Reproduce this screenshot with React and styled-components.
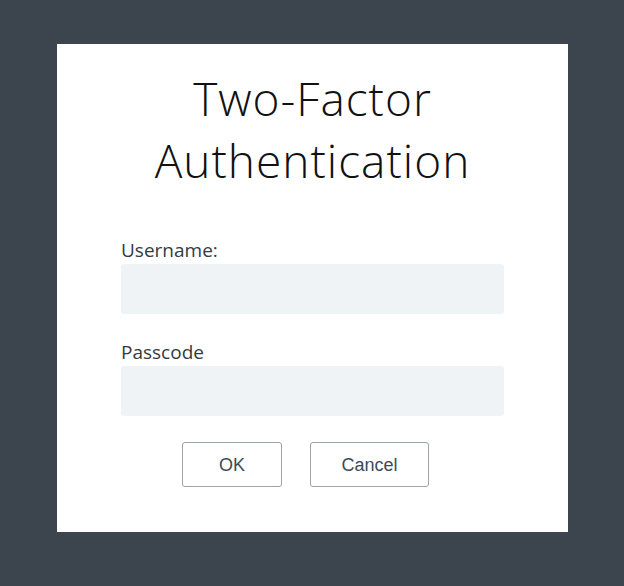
import React from "react";
import styled, { createGlobalStyle } from "styled-components";

const GlobalStyle = createGlobalStyle`
  html, body {
    margin: 0;
    padding: 0;
    background: #3c444d;
  }
`;

const Page = styled.div`
  width: 624px;
  height: 586px;
  padding: 44px 0 0 57px;
  box-sizing: border-box;
  background: #3c444d;
`;

const Card = styled.div`
  width: 511px;
  height: 488px;
  box-sizing: border-box;
  background: #ffffff;
  padding: 23px 64px 0 64px;
  display: flex;
  flex-direction: column;
`;

const Title = styled.h1`
  margin: 0;
  font-family: "Open Sans", Lato, sans-serif;
  font-weight: 300;
  font-size: 46px;
  line-height: 62px;
  letter-spacing: 1px;
  color: #111;
  text-align: center;
`;

const Field = styled.div`
  display: flex;
  flex-direction: column;
  margin-top: ${({ top }) => top}px;
`;

const Label = styled.label`
  font-family: "Open Sans", "Noto Sans", sans-serif;
  font-size: 19px;
  line-height: 22px;
  color: #333b42;
  margin-bottom: 3px;
`;

const Input = styled.input`
  height: 50px;
  width: 383px;
  box-sizing: border-box;
  border: none;
  border-radius: 3px;
  background: #eff3f5;
  outline: none;
  padding: 0 12px;
  font-size: 16px;
`;

const Buttons = styled.div`
  display: flex;
  justify-content: center;
  gap: 28px;
  margin-top: 26px;
  padding-right: 14px;
`;

const Button = styled.button`
  width: ${({ w }) => w}px;
  height: 45px;
  box-sizing: border-box;
  background: #fff;
  border: 1px solid #9ea3a8;
  border-radius: 3px;
  font-family: "Liberation Sans", Arial, sans-serif;
  font-size: 18px;
  color: #3d4a57;
  padding-top: 3px;
  cursor: pointer;
`;

const App = () => (
  <>
    <GlobalStyle />
    <Page>
      <Card>
        <Title>
          Two-Factor
          <br />
          Authentication
        </Title>
        <Field top={48}>
          <Label>Username:</Label>
          <Input type="text" />
        </Field>
        <Field top={27}>
          <Label>Passcode</Label>
          <Input type="password" />
        </Field>
        <Buttons>
          <Button w={100}>OK</Button>
          <Button w={119}>Cancel</Button>
        </Buttons>
      </Card>
    </Page>
  </>
);

export default App;
